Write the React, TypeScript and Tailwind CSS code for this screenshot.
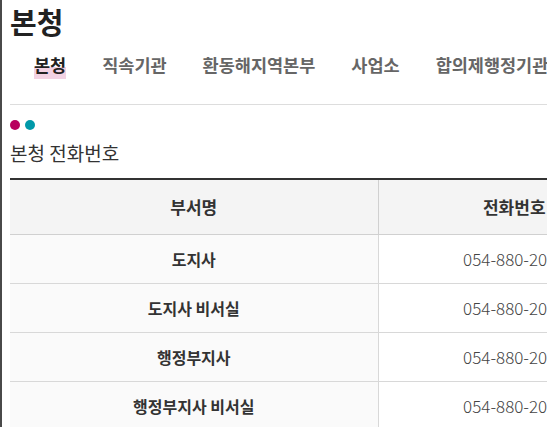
import React from "react";

const TABS = ["본청", "직속기관", "환동해지역본부", "사업소", "합의제행정기관"];

const ROWS = [
  { name: "도지사", tel: "054-880-2001" },
  { name: "도지사 비서실", tel: "054-880-2011" },
  { name: "행정부지사", tel: "054-880-2002" },
  { name: "행정부지사 비서실", tel: "054-880-2021" },
];

export default function App() {
  return (
    <div
      className="h-[427px] w-[547px] overflow-hidden border-l-2 border-[#4a4a4a] bg-white pl-[8px] text-[#222]"
      style={{ fontFamily: '"Noto Sans CJK KR", "Noto Sans", sans-serif' }}
    >
      <h1 className="pt-[3px] text-[29px] font-bold leading-[36px] text-[#222]">본청</h1>

      <div className="mt-[14px] flex whitespace-nowrap border-b border-[#dddddd] pb-[27px] pl-[24px]">
        {TABS.map((tab, i) => (
          <div key={tab} className="mr-[36px] shrink-0">
            {i === 0 ? (
              <span className="bg-[linear-gradient(transparent_55%,#f2d2e3_55%)] pb-[2px] text-[17.5px] font-bold leading-[24px] text-[#222]">
                {tab}
              </span>
            ) : (
              <span className="text-[17.5px] font-bold leading-[24px] text-[#666]">{tab}</span>
            )}
          </div>
        ))}
      </div>

      <div className="mt-[15px] flex gap-[5px]">
        <span className="h-[10px] w-[10px] rounded-full bg-[#b8005e]" />
        <span className="h-[10px] w-[10px] rounded-full bg-[#0099a9]" />
      </div>

      <h2 className="mt-[8px] text-[19px] font-normal leading-[30px] text-[#333]">본청 전화번호</h2>

      <table className="mt-[10px] w-[640px] shrink-0 border-collapse border-t-2 border-[#333]">
        <thead>
          <tr className="bg-[#f4f4f4]">
            <th className="h-[55px] w-[368px] border-b border-r border-[#d0d0d0] text-[17px] font-bold text-[#333]">
              부서명
            </th>
            <th className="h-[55px] border-b border-[#d0d0d0] text-[17px] font-bold text-[#333]">전화번호</th>
          </tr>
        </thead>
        <tbody>
          {ROWS.map((row) => (
            <tr key={row.name}>
              <td className="h-[49px] border-b border-r border-[#d8d8d8] bg-[#fafafa] text-center text-[16px] font-bold text-[#333]">
                {row.name}
              </td>
              <td className="h-[49px] border-b border-[#d8d8d8] text-center text-[17px] font-light text-[#444]">
                {row.tel}
              </td>
            </tr>
          ))}
        </tbody>
      </table>
    </div>
  );
}
